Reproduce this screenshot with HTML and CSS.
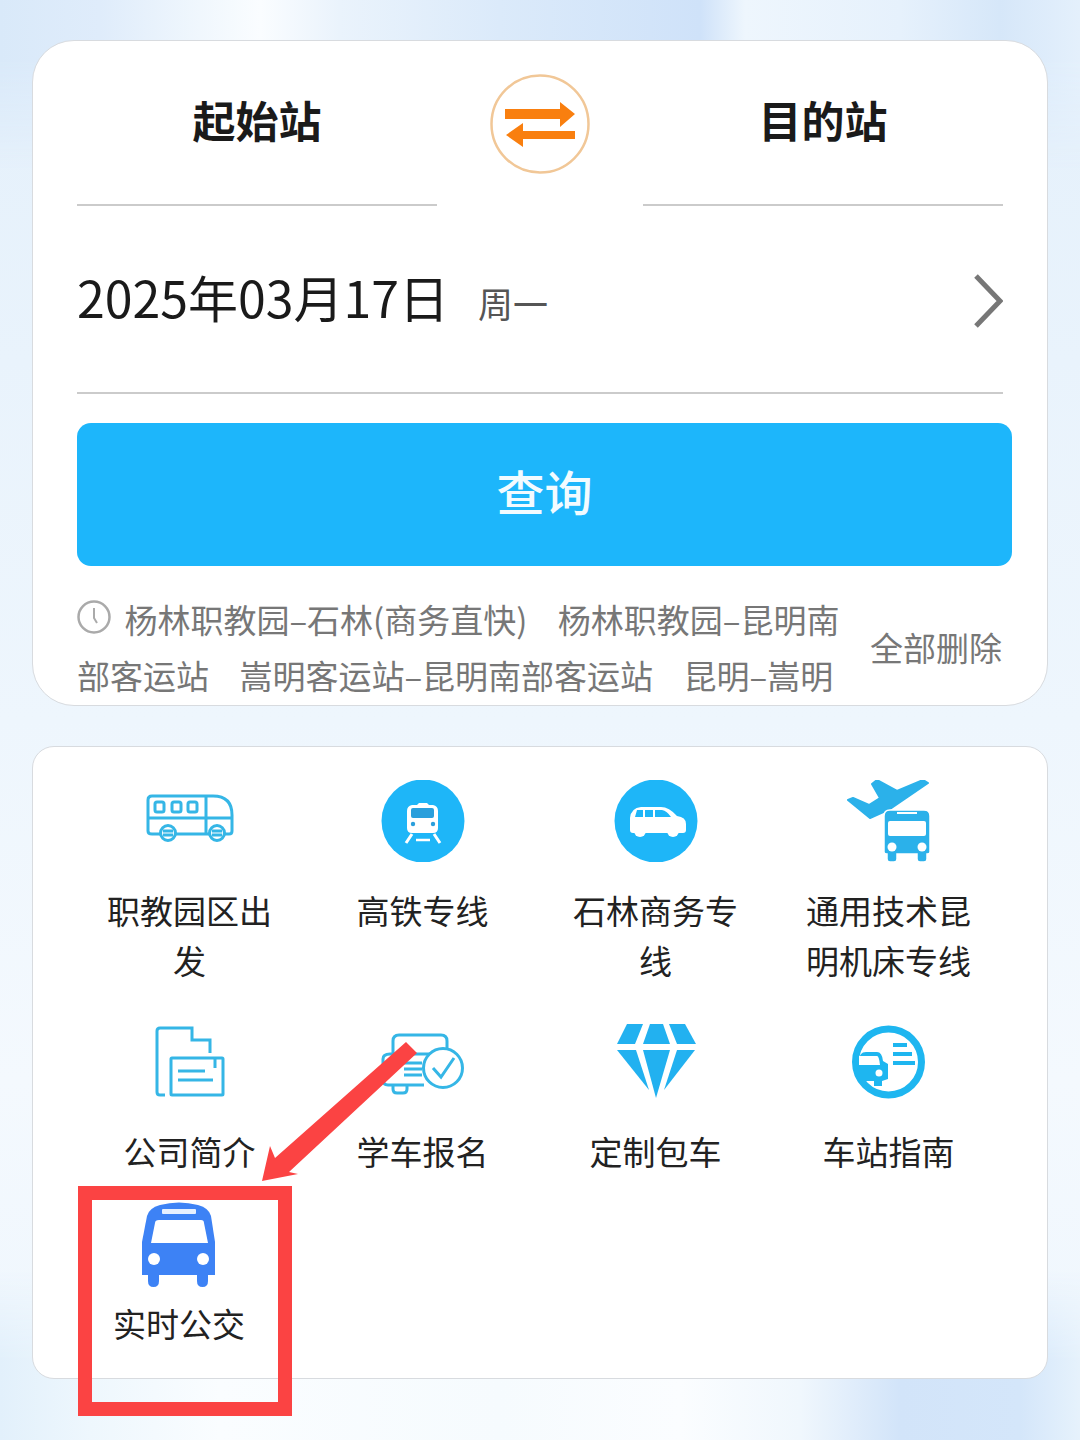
FILE: index.html
```html
<!DOCTYPE html>
<html lang="zh-CN">
<head>
    <meta charset="UTF-8">
    <meta name="viewport" content="width=device-width, initial-scale=1.0">
    <title>车票查询</title>
    <link rel="stylesheet" href="styles.css">
</head>
<body>
    <div class="page">
        <div class="card search-card">
            <div class="route">
                <div class="station">起始站</div>
                <svg class="swap" width="100" height="100" viewBox="0 0 100 100">
                    <circle cx="50" cy="50" r="48.5" fill="#fff" stroke="#f1c797" stroke-width="2.5"/>
                    <path d="M15 35H70V28L85 40L70 53V45H15Z" fill="#f97f0f"/>
                    <path d="M85 57H33V49L16 61L33 73V65H85Z" fill="#f97f0f"/>
                </svg>
                <div class="station">目的站</div>
            </div>
            <div class="date-row">
                <div class="date-text">
                    <span class="date">2025年03月17日</span>
                    <span class="weekday">周一</span>
                </div>
                <svg class="chevron" width="30" height="56" viewBox="0 0 30 56">
                    <path d="M3 3L27 28L3 53" fill="none" stroke="#777" stroke-width="5"/>
                </svg>
            </div>
            <button class="query-btn" type="button">查询</button>
            <div class="history">
                <div class="history-list">
                    <svg class="clock" width="34" height="34" viewBox="0 0 34 34">
                        <circle cx="17" cy="17" r="15.5" fill="none" stroke="#aaa" stroke-width="2.5"/>
                        <path d="M17 8V18L20 23" fill="none" stroke="#aaa" stroke-width="2"/>
                    </svg>
                    <span class="history-item">杨林职教园–石林(商务直快)</span>
                    <span class="history-item">杨林职教园–昆明南部客运站</span>
                    <span class="history-item">嵩明客运站–昆明南部客运站</span>
                    <span class="history-item">昆明–嵩明</span>
                </div>
                <div class="clear-all">全部删除</div>
            </div>
        </div>

        <div class="card menu-card">
            <div class="menu-item">
                <svg class="icon" width="90" height="82" viewBox="0 0 90 82">
                    <g transform="translate(0 13)" fill="none" stroke="#35b6e6" stroke-width="3">
                        <path d="M7 3H68Q87 3 87 22V38Q87 41 84 41H7Q3 41 3 38V7Q3 3 7 3Z"/>
                        <path d="M3 25H87M61 3V41"/>
                        <rect x="10" y="9" width="9" height="10" rx="2"/>
                        <rect x="27" y="9" width="9" height="10" rx="2"/>
                        <rect x="43" y="9" width="9" height="10" rx="2"/>
                        <circle cx="23" cy="40" r="7.5" fill="#fff"/>
                        <circle cx="72" cy="40" r="7.5" fill="#fff"/>
                        <path d="M18 38H28M18 42H28M67 38H77M67 42H77"/>
                    </g>
                </svg>
                <div class="menu-label">职教园区出发</div>
            </div>
            <div class="menu-item">
                <svg class="icon" width="90" height="82" viewBox="0 0 90 82">
                    <circle cx="45" cy="41" r="41.5" fill="#1eb6f8"/>
                    <path d="M41 23H49L51 25H55Q60 26 60 31V48Q60 53 55 53H34Q29 53 29 48V31Q29 26 34 25H39Z" fill="#fff"/>
                    <rect x="33" y="28" width="23" height="10" rx="2" fill="#2a9fdc"/>
                    <circle cx="35" cy="44" r="2.2" fill="#2a9fdc"/>
                    <circle cx="55" cy="44" r="2.2" fill="#2a9fdc"/>
                    <path d="M34 54L28 63M56 54L62 63" stroke="#fff" stroke-width="3" fill="none"/>
                    <path d="M38 60H52" stroke="#fff" stroke-width="2.5"/>
                </svg>
                <div class="menu-label">高铁专线</div>
            </div>
            <div class="menu-item">
                <svg class="icon" width="90" height="82" viewBox="0 0 90 82">
                    <circle cx="45" cy="41" r="41.5" fill="#1eb6f8"/>
                    <path d="M19 50V38Q20 28 30 27H50Q58 27 66 36Q75 37 75 44V50Q75 53 72 53H22Q19 53 19 50Z" fill="#fff"/>
                    <path d="M24 37L26 30H32V37ZM34 30H42V37H34ZM44 30H51Q56 31 60 37H44Z" fill="#1eb6f8"/>
                    <circle cx="29" cy="51" r="6" fill="#fff"/>
                    <circle cx="62" cy="51" r="6" fill="#fff"/>
                </svg>
                <div class="menu-label">石林商务专线</div>
            </div>
            <div class="menu-item">
                <svg class="icon" width="90" height="82" viewBox="0 0 90 82">
                    <path d="M4 20L9 18L25 25L36 18L28 4L33 0L53 11L79 0L84 3L46 29L26 38Z" fill="#2bb1ea" stroke="#2bb1ea" stroke-width="2" stroke-linejoin="round"/>
                    <path d="M40 36Q40 30 46 30H80Q86 30 86 36V72Q86 74 83 74V79Q83 82 80 82H76Q73 82 73 79V74H53V79Q53 82 50 82H46Q43 82 43 79V74Q40 74 40 72Z" fill="#2bb1ea" stroke="#fff" stroke-width="1.500"/>
                    <path d="M53 33H73" stroke="#fff" stroke-width="2"/>
                    <rect x="44" y="41" width="38" height="15" rx="2" fill="#fff"/>
                    <circle cx="48" cy="67" r="4.5" fill="#fff"/>
                    <circle cx="78" cy="67" r="4.5" fill="#fff"/>
                </svg>
                <div class="menu-label">通用技术昆明机床专线</div>
            </div>
            <div class="menu-item">
                <svg class="icon" width="90" height="82" viewBox="0 0 90 82">
                    <g fill="none" stroke="#35b6e6" stroke-width="3">
                        <path d="M20 74H15Q12 74 12 71V10Q12 7 15 7H47V19H65V32"/>
                        <rect x="26" y="37" width="52" height="37" rx="1"/>
                        <path d="M33 50H60M33 59H68M70 37V47"/>
                    </g>
                </svg>
                <div class="menu-label">公司简介</div>
            </div>
            <div class="menu-item">
                <svg class="icon" width="90" height="82" viewBox="0 0 90 82">
                    <g fill="none" stroke="#35b6e6" stroke-width="3">
                        <path d="M15 33V20Q15 14 21 14H63Q69 14 69 20V27"/>
                        <path d="M46 64H10Q5 64 5 58V38Q5 33 12 33H52"/>
                        <path d="M15 64V68Q15 72 19 72H25Q29 72 29 68V64"/>
                        <path d="M26 42H44M26 48H44M26 54H44"/>
                        <circle cx="65" cy="47" r="19.5" fill="#fff"/>
                        <path d="M55 47L63 56L76 37"/>
                    </g>
                </svg>
                <div class="menu-label">学车报名</div>
            </div>
            <div class="menu-item">
                <svg class="icon" width="90" height="82" viewBox="0 0 90 82">
                    <g fill="#22b1f0">
                        <path d="M16 3H32L24 23H6Z"/>
                        <path d="M39 3H52L59 23H32Z"/>
                        <path d="M58 3H74L85 23H66Z"/>
                        <path d="M6 29H25L38 69Z"/>
                        <path d="M32 29H59L45 77Z"/>
                        <path d="M66 29H84L53 69Z"/>
                    </g>
                </svg>
                <div class="menu-label">定制包车</div>
            </div>
            <div class="menu-item">
                <svg class="icon" width="90" height="82" viewBox="0 0 90 82">
                    <circle cx="44.5" cy="41" r="33" fill="none" stroke="#1eb6f0" stroke-width="7"/>
                    <path d="M49 24H63M49 33H68M49 42H71" stroke="#1eb6f0" stroke-width="4"/>
                    <path d="M15 40Q15 31 22 31H33Q38 31 39 40L44 43V58L38 60V65H30V60H15Z" fill="#1eb6f0"/>
                    <path d="M15 35H33Q35 35 36 44H15Z" fill="#fff"/>
                    <circle cx="35" cy="52" r="3.5" fill="#fff"/>
                </svg>
                <div class="menu-label">车站指南</div>
            </div>
            <div class="menu-item live-item">
                <svg class="icon" width="74" height="85" viewBox="0 0 74 85">
                    <g fill="#3d82f5">
                        <path d="M0 40L5 14Q7 6 18 3Q37 -2 56 3Q67 6 69 14L73 40V73H0Z"/>
                        <path d="M6 72H17V79Q17 85 11.500 85Q6 85 6 79Z"/>
                        <path d="M55 72H66V79Q66 85 60.500 85Q55 85 55 79Z"/>
                    </g>
                    <rect x="20" y="7" width="34" height="5" rx="1" fill="#e6f0ff"/>
                    <path d="M17 18H59Q62 18 62 21L66 41H9L13 21Q13 18 17 18Z" fill="#fff"/>
                    <circle cx="12" cy="57" r="6" fill="#fff"/>
                    <circle cx="61" cy="57" r="6" fill="#fff"/>
                </svg>
                <div class="menu-label">实时公交</div>
            </div>
        </div>

        <div class="mark-box"></div>
        <svg class="mark-arrow" width="170" height="150" viewBox="0 0 170 150">
            <path d="M146 2L157 13L29 132L38 134L2 141L10 106L15 118Z" fill="#fb4343"/>
        </svg>
    </div>
</body>
</html>
```

FILE: styles.css
```css
* {
    box-sizing: border-box;
}
body {
    margin: 0;
    font-family: "Noto Sans CJK SC", "Noto Sans", sans-serif;
}
.page {
    position: relative;
    isolation: isolate;
    width: 1080px;
    height: 1440px;
    padding: 40px 32px 0;
    overflow: hidden;
    background: linear-gradient(180deg, #e4f0fb 0, #eef6fd 50%, #f4f9fe 75%, #eef6fd 100%);
}
/* soft blue patches behind the cards */
.page::before,
.page::after {
    content: "";
    position: absolute;
    left: 0;
    width: 100%;
    height: 170px;
    z-index: -1;
}
.page::before {
    top: 0;
    background: linear-gradient(90deg, #d9e9f9 0, #dfecfb 100px, #f0f7fd 200px, #fafdff 260px, #eaf3fc 340px, #dbeafa 500px, #cfe2f9 700px, #eef6fd 745px, #e6f1fc 900px, #d6e7f9 1000px, #e4f0fc 1080px);
    mask-image: linear-gradient(180deg, #000 60px, transparent);
}
.page::after {
    bottom: 0;
    background: linear-gradient(90deg, #e2f0fb 0, #eef7fd 90px, #fafdff 220px, #f6fbfe 500px, #fbfdff 680px, #f0f7fd 800px, #d2e4f9 900px, #d4e6fa 1020px, #e6f2fc 1080px);
    mask-image: linear-gradient(0deg, #000 80px, transparent);
}
.card {
    background: #fff;
    border: 1px solid #d8dbdf;
}

/* search card */
.search-card {
    height: 666px;
    padding: 0 35px 0 44px;
    border-radius: 42px;
}
.route {
    display: flex;
    justify-content: space-between;
    align-items: flex-start;
    margin-right: 9px;
}
.station {
    width: 360px;
    height: 165px;
    padding-top: 47px;
    font-size: 43px;
    font-weight: 700;
    line-height: 62px;
    text-align: center;
    color: #1a1a1a;
    border-bottom: 2px solid #cbcbcb;
}
.swap {
    margin-top: 33px;
}
.date-row {
    display: flex;
    align-items: center;
    justify-content: space-between;
    height: 188px;
    margin-right: 9px;
    border-bottom: 2px solid #cbcbcb;
}
.date-text {
    display: flex;
    align-items: baseline;
    gap: 29px;
    padding-bottom: 6px;
    color: #1a1a1a;
}
.date {
    font-size: 50px;
}
.weekday {
    font-size: 35px;
    color: #555;
}
.chevron {
    margin-top: 4px;
}
.query-btn {
    display: block;
    width: 935px;
    height: 143px;
    margin-top: 29px;
    padding: 0 0 10px;
    border: none;
    border-radius: 14px;
    background: #1db6fb;
    color: #f2fbff;
    font-family: inherit;
    font-size: 48px;
    font-weight: 500;
}
.history {
    display: flex;
    align-items: center;
    justify-content: space-between;
    margin-top: 25px;
    margin-right: 10px;
    color: #777;
    font-size: 33px;
    line-height: 56px;
}
.history-list {
    width: 770px;
}
.clock {
    margin-right: 6px;
    vertical-align: -1px;
}
.history-item + .history-item {
    margin-left: 23px;
}
.clear-all {
    white-space: nowrap;
}

/* menu card */
.menu-card {
    display: grid;
    grid-template-columns: repeat(4, 1fr);
    row-gap: 34px;
    align-content: start;
    height: 633px;
    margin-top: 40px;
    padding: 33px 42px 0 40px;
    border-radius: 22px;
}
.menu-item {
    display: flex;
    flex-direction: column;
    align-items: center;
    padding: 0 30px;
}
.menu-label {
    margin-top: 23px;
    margin-bottom: 2px;
    font-size: 33px;
    line-height: 50px;
    text-align: center;
    color: #222;
}
.live-item {
    margin: -10px 0 0 -21px;
}
.live-item .menu-label {
    margin-top: 11px;
}

/* red annotation over the page */
.mark-box {
    position: absolute;
    left: 78px;
    top: 1186px;
    width: 214px;
    height: 230px;
    border: 14px solid #fb4343;
}
.mark-arrow {
    position: absolute;
    left: 260px;
    top: 1040px;
}
```
